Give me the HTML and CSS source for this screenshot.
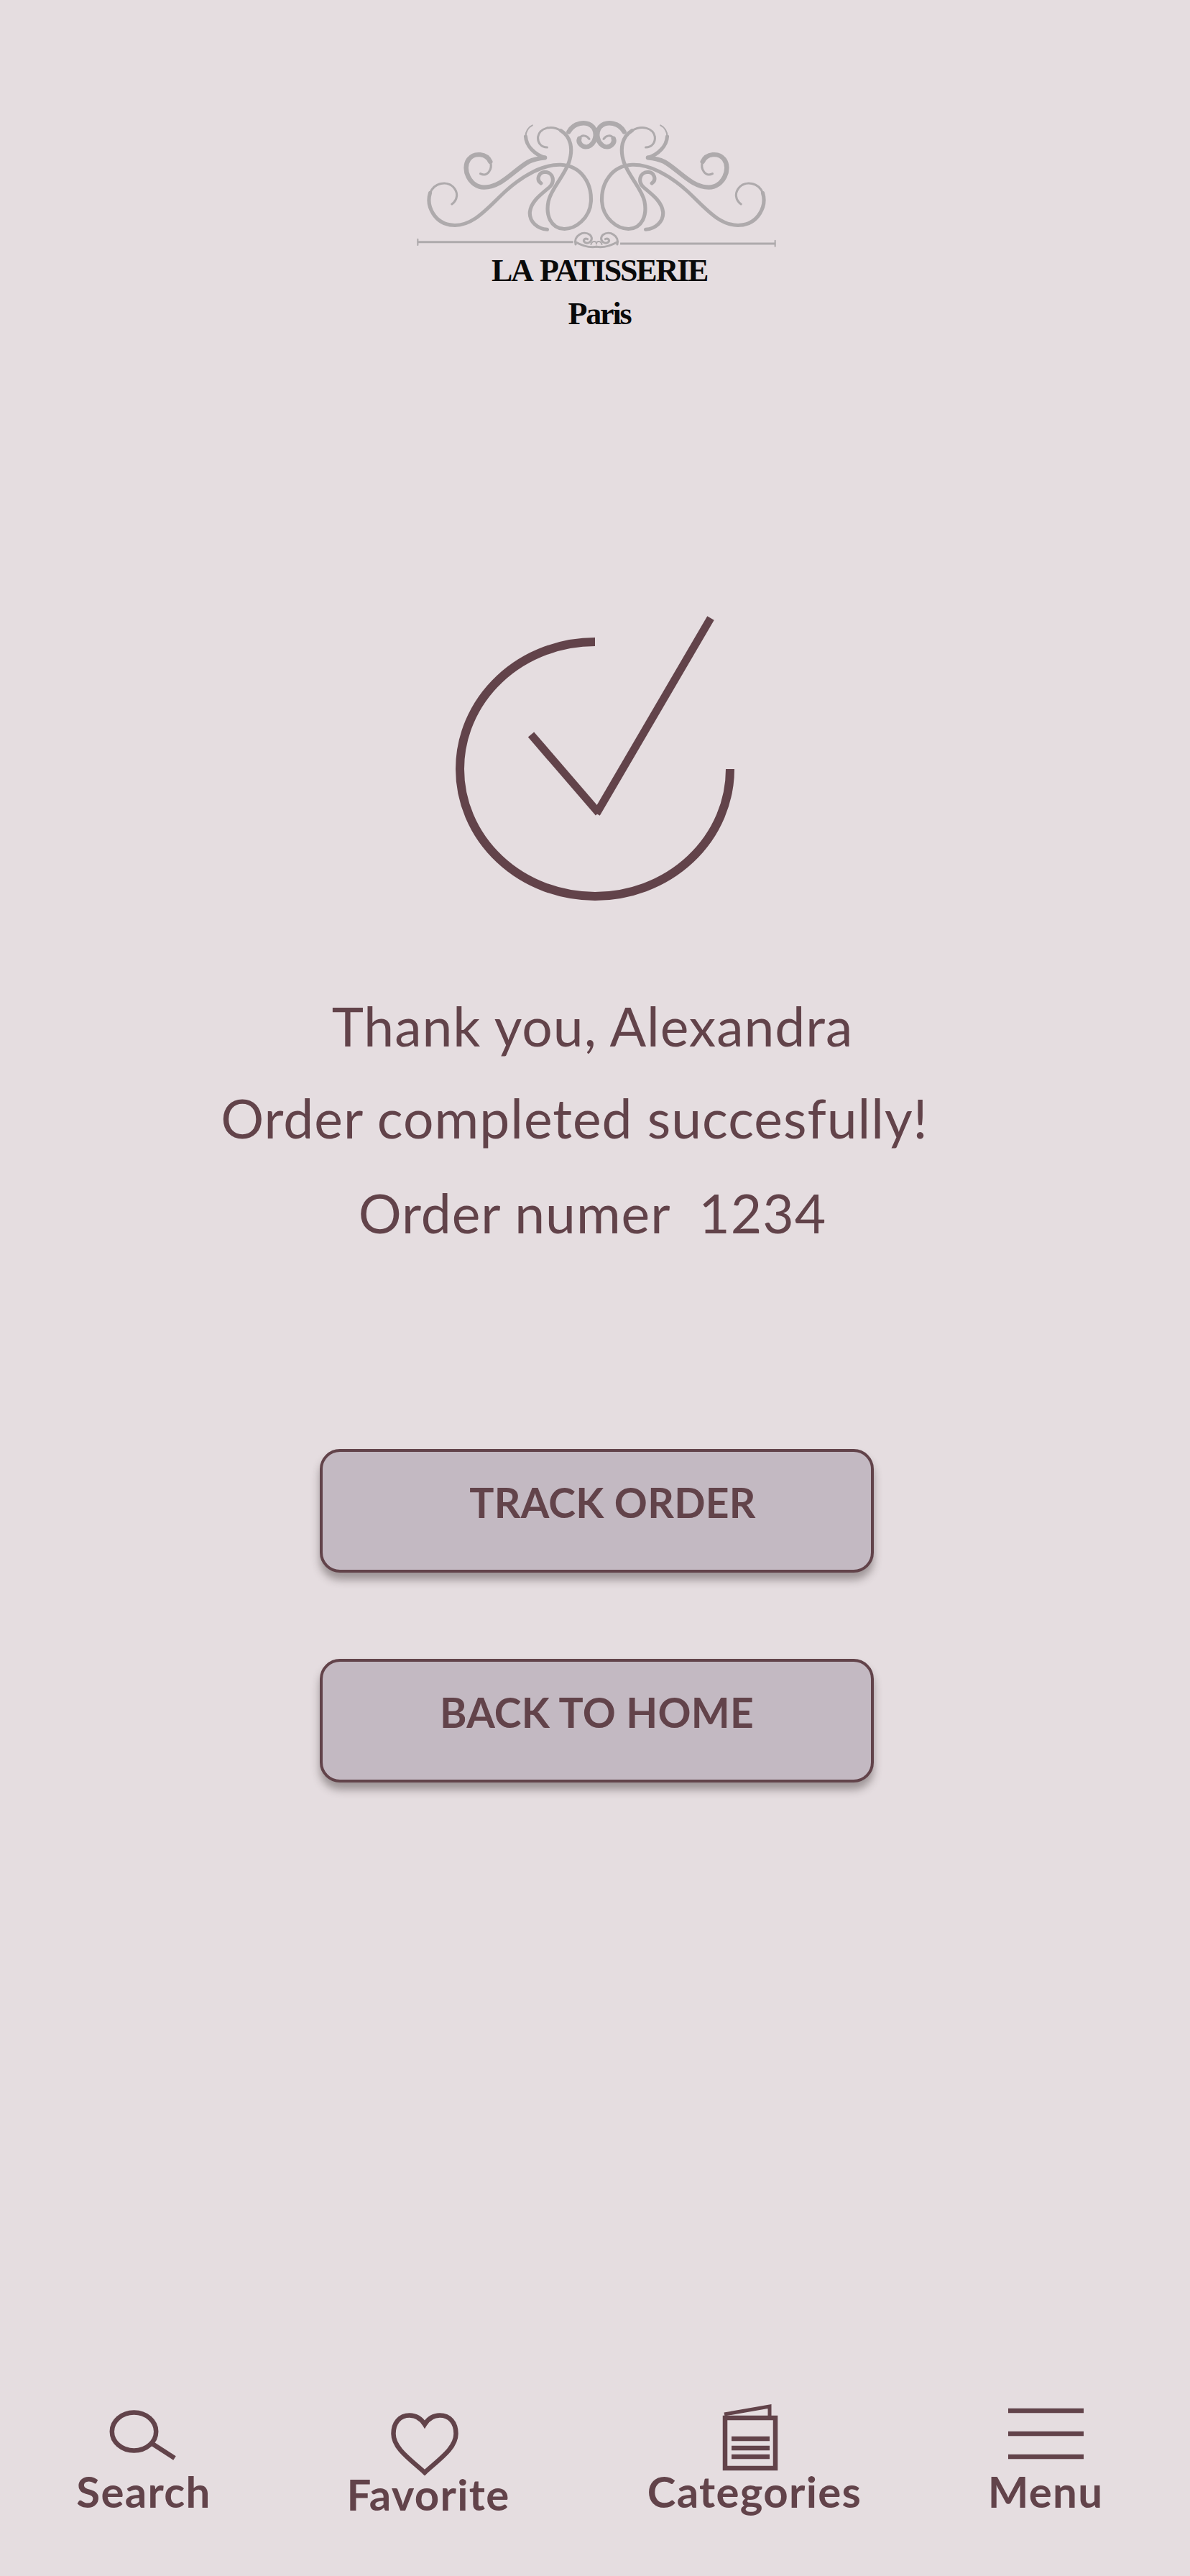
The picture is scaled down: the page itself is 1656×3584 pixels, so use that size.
FILE: index.html
```html
<!DOCTYPE html>
<html lang="en">
<head>
<meta charset="utf-8">
<title>La Patisserie - Order completed</title>
<link rel="stylesheet" href="styles.css">
</head>
<body>
<main class="page">
  <header class="brand">
    <svg class="ornament" viewBox="0 60 1568 570" preserveAspectRatio="none" aria-hidden="true">
      <defs>
        <g id="half">
          <path class="o-thin" d="M200 432C222 415 228 385 205 360C180 335 130 340 112 385"/>
          <path class="o-mid" d="M112 385C95 440 130 515 205 520C290 525 350 440 420 375C490 310 570 265 640 268C720 272 765 340 762 420C758 490 700 538 650 535C600 530 578 480 590 420C600 370 650 320 672 260C692 200 680 150 640 125"/>
          <path class="o-thin" d="M640 125C600 100 555 115 548 150C545 175 560 195 585 195"/>
          <path class="o-thick" d="M355 255C340 220 290 215 268 245C240 285 270 360 330 362C400 362 450 290 510 255C530 245 555 240 575 238"/>
          <path class="o-thin" d="M315 305C345 320 365 285 355 255"/>
          <path class="o-mid" d="M575 238C535 225 500 190 498 150"/>
          <path class="o-hair" d="M498 150C497 130 510 110 525 103"/>
          <path class="o-mid" d="M560 345C540 330 550 300 575 298C610 298 620 340 590 365C560 392 520 420 515 465C512 505 545 535 585 538"/>
          <path class="o-thick" d="M672 130C690 95 740 80 770 110C790 135 780 180 750 192C725 198 708 175 715 158"/>
          <path class="o-thin" d="M715 158C725 140 745 145 755 160"/>
          <path class="o-thin" d="M700 600C690 565 730 540 758 560C775 578 755 602 738 592C728 585 735 572 748 578"/>
          <path class="o-thin" d="M700 590C725 605 750 615 784 610"/>
          <path class="o-hair" d="M762 600C765 585 784 583 784 598"/>
        </g>
      </defs>
      <use href="#half"/>
      <use href="#half" transform="translate(1568 0) scale(-1 1)"/>
      <path class="o-rule" d="M60 590H690M880 597H1508"/>
      <path class="o-hair" d="M62 578V603M1506 584V608"/>
    </svg>
    <div class="brand-name">LA PATISSERIE</div>
    <div class="brand-name">Paris</div>
  </header>

  <svg class="success" viewBox="600 830 460 440" aria-hidden="true">
    <path class="success-arc" d="M828 893A188 177 0 1 0 1016 1070"/>
    <path class="success-tick" d="M989 860L830 1132"/>
    <path class="success-tick" d="M739 1022L833 1131"/>
  </svg>

  <section class="message">
    <p class="message-line">Thank you, Alexandra</p>
    <p class="message-line message-line--wide">Order completed succesfully!</p>
    <p class="message-line message-line--last">Order numer&nbsp; 1234</p>
  </section>

  <section class="actions">
    <a class="button button--shifted">TRACK ORDER</a>
    <a class="button">BACK TO HOME</a>
  </section>

  <nav class="tabbar">
    <a class="tab">
      <svg class="tab-icon" viewBox="50 3344 300 100" aria-hidden="true">
        <ellipse class="icon-line" cx="186.5" cy="3382" rx="30.7" ry="26.5"/>
        <path class="icon-line" d="M212 3399L243 3419"/>
      </svg>
      <span class="tab-label">Search</span>
    </a>
    <a class="tab tab--low">
      <svg class="tab-icon" viewBox="446 3344 300 100" aria-hidden="true">
        <path class="icon-line" d="M591 3372C586 3364 580 3359.5 570 3359.5C556 3359.5 547.5 3370 547.5 3385C547.5 3405 570 3420 591 3439C612 3420 634.5 3405 634.5 3385C634.5 3370 626 3359.5 612 3359.5C602 3359.5 596 3364 591 3372Z"/>
      </svg>
      <span class="tab-label">Favorite</span>
    </a>
    <a class="tab">
      <svg class="tab-icon" viewBox="900 3344 300 100" aria-hidden="true">
        <rect class="icon-line" x="1009" y="3363" width="70" height="70"/>
        <path class="icon-line icon-line--thin" d="M1008 3358L1071 3347V3362"/>
        <path class="icon-line" d="M1018 3392H1071M1018 3405H1071M1018 3417H1071"/>
      </svg>
      <span class="tab-label">Categories</span>
    </a>
    <a class="tab">
      <svg class="tab-icon" viewBox="1305 3344 300 100" aria-hidden="true">
        <path class="icon-line" d="M1403 3353H1508M1403 3385H1508M1403 3417H1508"/>
      </svg>
      <span class="tab-label">Menu</span>
    </a>
  </nav>
</main>
</body>
</html>
```

FILE: styles.css
```css
* {
  box-sizing: border-box;
}

html,
body {
  margin: 0;
  padding: 0;
  background: #e5dde0;
}

.page {
  display: flex;
  flex-direction: column;
  width: 1656px;
  height: 3584px;
  padding-top: 160px;
  padding-bottom: 79px;
  font-family: Lato, "Noto Sans", sans-serif;
  color: #62434a;
}

/* Brand */
.brand {
  display: flex;
  flex-direction: column;
  align-items: center;
  padding-left: 4px;
}

.ornament {
  display: block;
  width: 540px;
  height: 190px;
  fill: none;
  stroke: #aeaaac;
  stroke-linecap: round;
}

.o-hair { stroke-width: 6; }
.o-thin { stroke-width: 9; }
.o-mid { stroke-width: 15; }
.o-thick { stroke-width: 19; }
.o-rule { stroke-width: 9; stroke-linecap: butt; }

.brand-name {
  height: 60px;
  margin-left: 8px;
  font-family: "Liberation Serif", serif;
  font-size: 44px;
  font-weight: 700;
  line-height: 60px;
  letter-spacing: -2.2px;
  word-spacing: 4px;
  color: #0a0a0a;
}

.brand-name:first-of-type {
  margin-top: -3px;
}

/* Success mark */
.success {
  display: block;
  flex: none;
  width: 460px;
  height: 440px;
  margin: 363px 0 0 600px;
  fill: none;
  stroke: #62434a;
}

.success-arc { stroke-width: 12; }
.success-tick { stroke-width: 11; }

/* Message */
.message {
  margin-top: 92px;
}

.message-line {
  margin: 0;
  padding-right: 7px;
  font-size: 75px;
  font-weight: 400;
  line-height: 130px;
  letter-spacing: 1px;
  text-align: center;
  white-space: nowrap;
}

.message-line--wide {
  margin-top: -2px;
  padding-right: 57px;
}

.message-line--last {
  margin-top: 2px;
}

/* Buttons */
.actions {
  display: flex;
  flex-direction: column;
  gap: 120px;
  margin-top: 264px;
  padding-left: 445px;
}

.button {
  display: flex;
  justify-content: center;
  width: 771px;
  height: 172px;
  padding-top: 35px;
  border: 4px solid #62434a;
  border-radius: 28px;
  background: #c3b9c2;
  box-shadow: 0 10px 12px rgba(60, 50, 50, 0.42);
  font-size: 57px;
  font-weight: 700;
  line-height: 70px;
  letter-spacing: 0.3px;
}

.button--shifted {
  padding-left: 44px;
}

/* Tab bar */
.tabbar {
  display: grid;
  grid-template-columns: 400px 392px 516px 294px;
  margin-top: auto;
}

.tab {
  display: flex;
  flex-direction: column;
  align-items: center;
}

.tab-icon {
  display: block;
  width: 300px;
  height: 100px;
  fill: none;
  stroke: #62434a;
}

.icon-line { stroke-width: 6.5; }
.icon-line--thin { stroke-width: 5; }

.tab-label {
  margin-top: -14px;
  font-size: 60px;
  font-weight: 700;
  line-height: 70px;
  letter-spacing: 1.3px;
}

.tab--low .tab-label {
  margin-top: -10px;
}
```
